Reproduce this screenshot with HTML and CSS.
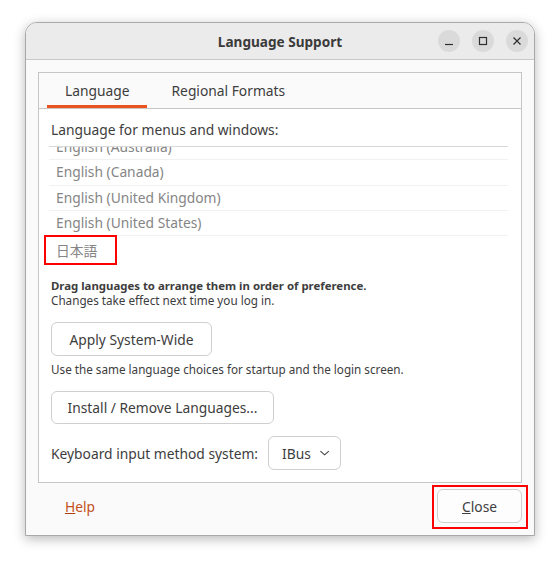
FILE: index.html
```html
<!DOCTYPE html>
<html lang="en">
<head>
<meta charset="utf-8">
<title>Language Support</title>
<link rel="stylesheet" href="styles.css">
</head>
<body>
<div class="window">
  <header class="titlebar">
    <div class="title">Language Support</div>
    <div class="controls">
      <button class="wbtn" aria-label="Minimize">
        <svg width="22" height="22" viewBox="0 0 22 22"><path d="M7 14.5h8" stroke="#2e2e2e" stroke-width="1.2" fill="none"/></svg>
      </button>
      <button class="wbtn" aria-label="Maximize">
        <svg width="22" height="22" viewBox="0 0 22 22"><rect x="7.5" y="7.5" width="7" height="7" stroke="#2e2e2e" stroke-width="1.2" fill="none"/></svg>
      </button>
      <button class="wbtn" aria-label="Close">
        <svg width="22" height="22" viewBox="0 0 22 22"><path d="M7.5 7.5l7 7M14.5 7.5l-7 7" stroke="#2e2e2e" stroke-width="1.2" fill="none"/></svg>
      </button>
    </div>
  </header>
  <main class="body">
    <div class="notebook">
      <div class="tabs">
        <div class="tab active">Language</div>
        <div class="tab">Regional Formats</div>
      </div>
      <div class="page">
        <div class="heading">Language for menus and windows:</div>
        <div class="list">
          <div class="list-inner">
            <div class="row">English (Australia)</div>
            <div class="row">English (Canada)</div>
            <div class="row">English (United Kingdom)</div>
            <div class="row">English (United States)</div>
            <div class="row cjk">日本語</div>
          </div>
        </div>
        <div class="mark mark-jp"></div>
        <div class="note note-drag"><b>Drag languages to arrange them in order of preference.</b><br>Changes take effect next time you log in.</div>
        <button class="btn btn-apply">Apply System-Wide</button>
        <div class="note note-use">Use the same language choices for startup and the login screen.</div>
        <button class="btn btn-install">Install / Remove Languages...</button>
        <div class="kbd-row">
          <span class="kbd-label">Keyboard input method system:</span>
          <button class="combo">IBus
            <svg width="12" height="12" viewBox="0 0 12 12"><path d="M1.5 4l4.5 4 4.5-4" stroke="#3d3d3d" stroke-width="1.1" fill="none"/></svg>
          </button>
        </div>
      </div>
    </div>
    <div class="actions">
      <button class="flat help"><u>H</u>elp</button>
      <button class="btn close"><u>C</u>lose<span class="mark mark-close"></span></button>
    </div>
  </main>
</div>
</body>
</html>
```
FILE: styles.css
```css
html, body {
  margin: 0;
  padding: 0;
  background: #ffffff;
}
body {
  width: 560px;
  height: 564px;
  font-family: "Noto Sans", "Noto Sans CJK JP", sans-serif;
  color: #3d3d3d;
  font-size: 13.8px;
}
button {
  font-family: inherit;
  font-size: inherit;
  color: inherit;
}
.window {
  box-sizing: border-box;
  margin: 22px 0 0 25px;
  width: 510px;
  height: 514px;
  border: 1px solid #a9a9a9;
  border-radius: 12px 12px 0 0;
  background: #fafafa;
  box-shadow: 0 3px 12px rgba(0, 0, 0, 0.28);
  display: flex;
  flex-direction: column;
}
.titlebar {
  height: 36px;
  flex: none;
  background: #ebebeb;
  border-bottom: 1px solid #c9c9c9;
  border-radius: 11px 11px 0 0;
  display: flex;
  align-items: center;
  justify-content: center;
  position: relative;
}
.title {
  font-weight: 700;
  font-size: 13.6px;
  color: #3a3a3a;
}
.controls {
  position: absolute;
  right: 6px;
  top: 7px;
  display: flex;
  gap: 12px;
}
.wbtn {
  width: 22px;
  height: 22px;
  padding: 0;
  border: none;
  border-radius: 50%;
  background: #dadada;
  display: flex;
}
.body {
  flex: 1;
  padding: 12px 12px 0 12px;
  display: flex;
  flex-direction: column;
}
.notebook {
  box-sizing: border-box;
  height: 411px;
  border: 1px solid #c6c6c6;
  display: flex;
  flex-direction: column;
  flex: none;
}
.tabs {
  height: 35px;
  flex: none;
  background: #fafafa;
  border-bottom: 1px solid #c6c6c6;
  display: flex;
  gap: 7px;
  padding-left: 8px;
}
.tab {
  padding: 0 17px 0 18px;
  display: flex;
  align-items: center;
  box-sizing: border-box;
  height: 35px;
  border-bottom: 3px solid transparent;
  padding-top: 3px;
  color: #3d3d3d;
}
.tab.active {
  border-bottom-color: #e95420;
}
.page {
  flex: 1;
  background: #ffffff;
  padding: 11px 13px 0 12px;
  position: relative;
  display: flex;
  flex-direction: column;
  align-items: flex-start;
}
.heading {
  line-height: 20px;
}
.list {
  align-self: stretch;
  margin: 6px 0 0 -2px;
  height: 114px;
  border-top: 1px solid #d8d8d8;
  overflow: hidden;
}
.list-inner {
  margin-top: -12px;
}
.row {
  height: 24.34px;
  line-height: 24px;
  border-bottom: 1px solid #f1f1f1;
  padding-left: 7px;
  color: #858585;
}
.row.cjk {
  font-family: "Noto Sans CJK JP", "Noto Sans", sans-serif;
  border-bottom: none;
  padding-top: 2px;
}
.mark {
  position: absolute;
  border: 2px solid #ff0000;
  box-sizing: border-box;
  pointer-events: none;
}
.mark-jp {
  left: 5px;
  top: 126px;
  width: 73px;
  height: 30px;
}
.note {
  font-size: 11.7px;
  line-height: 15px;
}
.note-drag {
  margin-top: 17px;
}
.note-drag b {
  font-weight: 700;
  font-size: 11.4px;
}
.btn {
  box-sizing: border-box;
  height: 34px;
  padding: 0 17px;
  border: 1px solid #cfcfcf;
  border-radius: 6px;
  background: #ffffff;
}
.btn-apply {
  margin-top: 14px;
  width: 161px;
  padding: 0;
}
.note-use {
  margin-top: 6px;
}
.btn-install {
  margin-top: 14px;
  height: 33px;
  width: 223px;
  padding: 0;
}
.kbd-row {
  margin-top: 12px;
  display: flex;
  align-items: center;
  gap: 10px;
}
.combo {
  box-sizing: border-box;
  height: 34px;
  width: 73px;
  padding: 0 10px 0 13px;
  border: 1px solid #cfcfcf;
  border-radius: 6px;
  background: #ffffff;
  display: flex;
  align-items: center;
  gap: 8px;
}
.actions {
  display: flex;
  justify-content: space-between;
  align-items: flex-start;
  padding: 6px 0 0 0;
}
.flat {
  border: none;
  background: transparent;
  height: 34px;
  padding: 0 27px;
}
.help {
  color: #c2501c;
}
.help u {
  text-decoration-color: #b03c0c;
}
.close {
  position: relative;
  width: 85px;
  padding: 0;
  background: #fdfdfd;
}
.mark-close {
  top: -5px;
  left: -6px;
  right: -7px;
  bottom: -7px;
}
```
